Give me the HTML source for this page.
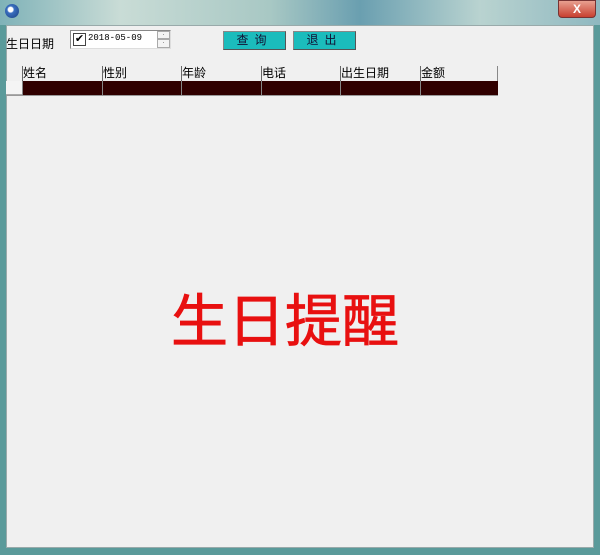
<!DOCTYPE html>
<html><head><meta charset="utf-8"><style>
*{margin:0;padding:0;box-sizing:border-box}
body{width:600px;height:555px;overflow:hidden;position:relative;font-family:"Liberation Sans","Noto Sans CJK SC",sans-serif;background:#5a9a9a}
.title{position:absolute;left:0;top:0;width:600px;height:25px;background:linear-gradient(90deg,#7fb2b8 0%,#c9dcd6 20%,#a8c8c4 45%,#6a9fb0 60%,#b9d3d0 80%,#8fb8c0 100%)}
.client{position:absolute;left:6px;top:25px;width:588px;height:523px;background:#f0f0f0;border:1px solid #9aa;}
.close{position:absolute;left:558px;top:0;width:38px;height:18px;background:linear-gradient(#e8a090,#c84030);border:1px solid #733;border-radius:0 0 4px 4px;color:#fff;font-weight:bold;font-size:12px;text-align:center;line-height:16px}
.icon{position:absolute;left:5px;top:4px;width:14px;height:14px;border-radius:50%;background:radial-gradient(circle at 40% 40%,#fff 0 20%,#3a6fc0 30%,#1a3f80)}
.abs{position:absolute}
.btn{position:absolute;top:31px;width:63px;height:19px;background:#1bbcbc;border:1px solid #888;border-right-color:#555;border-bottom-color:#555;font-size:12px;text-align:center;line-height:17px;color:#113;letter-spacing:6px}
.hdr{position:absolute;top:66px;height:15px;font-size:12px;line-height:15px;border-left:1px solid #666}
.cell{position:absolute;top:81px;height:14px;background:#300000;border-left:1px solid #888}
</style></head><body>
<div class="title"></div>
<div class="icon"></div>
<div class="close">X</div>
<div class="client"></div>
<div class="abs" style="left:6px;top:35px;font-size:12px">生日日期</div>
<div class="abs" style="left:70px;top:30px;width:101px;height:19px;background:#fff;border:1px solid #888;border-right-color:#ddd;border-bottom-color:#ddd"></div>
<div class="abs" style="left:73px;top:33px;width:13px;height:13px;border:1px solid #444;font-size:11px;line-height:11px;text-align:center">✔</div>
<div class="abs" style="left:88px;top:33px;font-size:9px;font-family:'Liberation Mono',monospace">2018-05-09</div>
<div class="abs" style="left:157px;top:31px;width:13px;height:8px;border:1px solid #aaa;background:#f4f4f4;font-size:6px;text-align:center;line-height:6px">·</div>
<div class="abs" style="left:157px;top:39px;width:13px;height:9px;border:1px solid #aaa;background:#f4f4f4;font-size:6px;text-align:center;line-height:6px">·</div>
<div class="btn" style="left:223px">查询</div>
<div class="btn" style="left:293px">退出</div>
<div class="abs" style="left:6px;top:81px;width:16px;height:14px;background:#f4f4f4;border-bottom:1px solid #aaa"></div>
<div class="hdr" style="left:22px;width:80px">姓名</div>
<div class="hdr" style="left:102px;width:79px">性别</div>
<div class="hdr" style="left:181px;width:80px">年龄</div>
<div class="hdr" style="left:261px;width:79px">电话</div>
<div class="hdr" style="left:340px;width:80px">出生日期</div>
<div class="hdr" style="left:420px;width:78px;border-right:1px solid #888">金额</div>
<div class="cell" style="left:22px;width:80px"></div>
<div class="cell" style="left:102px;width:79px"></div>
<div class="cell" style="left:181px;width:80px"></div>
<div class="cell" style="left:261px;width:79px"></div>
<div class="cell" style="left:340px;width:80px"></div>
<div class="cell" style="left:420px;width:78px"></div>
<div class="abs" style="left:6px;top:95px;width:492px;height:1px;background:#999"></div>
<div class="abs" style="left:171px;top:289px;font-size:57px;line-height:66px;color:#e81010;white-space:nowrap;-webkit-text-stroke:0.8px #e81010">生日提醒</div>
</body></html>
